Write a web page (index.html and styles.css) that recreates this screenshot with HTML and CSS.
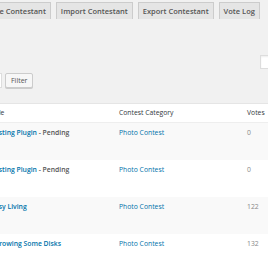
FILE: index.html
```html
<!DOCTYPE html>
<html lang="en">
<head>
    <meta charset="UTF-8">
    <meta name="viewport" content="width=device-width, initial-scale=1.0">
    <title>Contestants</title>
    <link rel="stylesheet" href="styles.css">
</head>
<body>
    <div class="wrap">
        <nav class="nav-tabs">
            <a href="#" class="nav-tab">Move Contestant</a>
            <a href="#" class="nav-tab">Import Contestant</a>
            <a href="#" class="nav-tab">Export Contestant</a>
            <a href="#" class="nav-tab">Vote Log</a>
        </nav>
        <div class="search-row">
            <input type="text" class="search-input">
        </div>
        <div class="tablenav">
            <select class="cat-select"><option></option></select>
            <button class="filter-btn">Filter</button>
        </div>
        <table class="contest-table">
            <thead>
                <tr>
                    <th class="col-title">Title</th>
                    <th class="col-cat">Contest Category</th>
                    <th class="col-votes">Votes</th>
                </tr>
            </thead>
            <tbody>
                <tr class="alt">
                    <td><a href="#" class="row-title">Testing Plugin</a><span class="state"> - Pending</span></td>
                    <td><a href="#" class="cat-link">Photo Contest</a></td>
                    <td class="votes">0</td>
                </tr>
                <tr>
                    <td><a href="#" class="row-title">Testing Plugin</a><span class="state"> - Pending</span></td>
                    <td><a href="#" class="cat-link">Photo Contest</a></td>
                    <td class="votes">0</td>
                </tr>
                <tr class="alt">
                    <td><a href="#" class="row-title">Easy Living</a></td>
                    <td><a href="#" class="cat-link">Photo Contest</a></td>
                    <td class="votes">122</td>
                </tr>
                <tr>
                    <td><a href="#" class="row-title">Throwing Some Disks</a></td>
                    <td><a href="#" class="cat-link">Photo Contest</a></td>
                    <td class="votes">132</td>
                </tr>
            </tbody>
        </table>
    </div>
</body>
</html>
```

FILE: styles.css
```css
html, body {
    margin: 0;
    padding: 0;
    width: 268px;
    height: 268px;
    overflow: hidden;
    background: #f1f1f1;
    font-family: 'Open Sans', sans-serif;
    color: #444;
}
.wrap {
    margin-left: -20px;
    width: 320px;
}
.nav-tabs {
    display: flex;
    gap: 5px;
    padding-top: 2px;
    margin-left: -1px;
    height: 17px;
}
.nav-tab {
    display: block;
    padding: 0 4px;
    line-height: 17px;
    font-size: 7.5px;
    font-weight: 600;
    color: #555;
    text-decoration: none;
    background: #e5e5e5;
    border: 1px solid #ccc;
    border-bottom: none;
}
.search-row {
    display: flex;
    justify-content: flex-end;
    padding-top: 36px;
}
.search-input {
    width: 60px;
    height: 12px;
    margin: 0 -22px 0 0;
    padding: 0;
    border: 1px solid #ddd;
    background: #fff;
    box-shadow: inset 0 1px 2px rgba(0, 0, 0, 0.07);
}
.tablenav {
    display: flex;
    gap: 3px;
    padding-top: 4px;
    height: 15px;
}
.cat-select {
    width: 22px;
    height: 15px;
    margin: 0;
    border: 1px solid #ddd;
    background: #fff;
}
.filter-btn {
    height: 15px;
    padding: 0 5px;
    margin: 0;
    font-family: 'Open Sans', sans-serif;
    font-size: 7px;
    color: #555;
    background: #f7f7f7;
    border: 1px solid #ccc;
    border-radius: 2px;
    box-shadow: 0 1px 0 #ccc;
}
.contest-table {
    margin-top: 15px;
    width: 320px;
    border-collapse: collapse;
    table-layout: fixed;
    background: #fff;
    border-top: 1px solid #e5e5e5;
}
.contest-table th,
.contest-table td {
    text-align: left;
    padding: 0 0 0 11px;
    vertical-align: top;
    font-size: 6.8px;
}
.contest-table th {
    height: 17px;
    line-height: 18px;
    font-weight: 400;
    color: #32373c;
    border-bottom: 1px solid #eee;
}
.contest-table td {
    height: 37px;
    padding-top: 5px;
    line-height: 9px;
    box-sizing: border-box;
}
.col-title {
    width: 117px;
}
.col-cat {
    width: 117px;
}
.alt {
    background: #f9f9f9;
}
.row-title {
    color: #0073aa;
    font-weight: 600;
    text-decoration: none;
}
.state {
    color: #555;
    font-weight: 600;
}
.cat-link {
    color: #0073aa;
    text-decoration: none;
}
.votes {
    color: #888;
}
```
